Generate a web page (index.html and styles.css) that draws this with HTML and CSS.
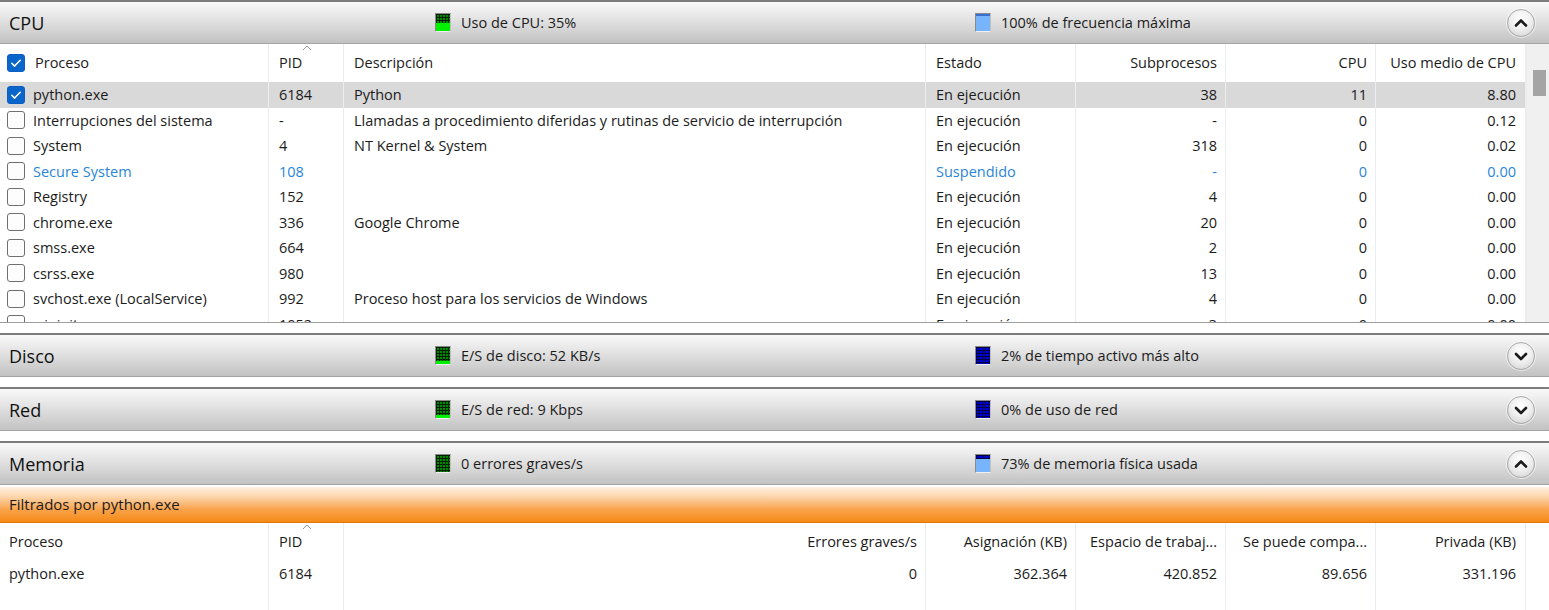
FILE: index.html
```html
<!DOCTYPE html>
<html lang="es">
<head>
<meta charset="utf-8">
<title>Monitor de recursos</title>
<link rel="stylesheet" href="styles.css">
</head>
<body>
<div class="app">

  <section class="panel">
    <header class="bar">
      <div class="bar-title">CPU</div>
      <div class="stat"><span class="ico ico-green fill-45"></span>Uso de CPU: 35%</div>
      <div class="stat"><span class="ico ico-freq"></span>100% de frecuencia máxima</div>
      <button class="chev"><svg width="28" height="28" viewBox="0 0 28 28"><path d="M9 16.5 L14 11.5 L19 16.5" fill="none" stroke="#1c1c1c" stroke-width="2.6" stroke-linecap="round" stroke-linejoin="round"/></svg></button>
    </header>
    <div class="tbl-wrap">
      <div class="tbl">
        <div class="row head">
          <div class="c c-proc"><span class="cb on"><svg width="18" height="18" viewBox="0 0 18 18"><path d="M4.8 9.3 L7.6 12.1 L13.2 6.3" fill="none" stroke="#fff" stroke-width="1.5" stroke-linecap="round" stroke-linejoin="round"/></svg></span><span class="head-lbl">Proceso</span></div>
          <div class="c c-sort">PID<svg class="sort" width="10" height="6" viewBox="0 0 10 6"><path d="M1 5 L5 1 L9 5" fill="none" stroke="#9a9a9a" stroke-width="1"/></svg></div>
          <div class="c">Descripción</div>
          <div class="c">Estado</div>
          <div class="c r">Subprocesos</div>
          <div class="c r">CPU</div>
          <div class="c r">Uso medio de CPU</div>
        </div>
        <div class="row sel">
          <div class="c c-proc"><span class="cb on"><svg width="18" height="18" viewBox="0 0 18 18"><path d="M4.8 9.3 L7.6 12.1 L13.2 6.3" fill="none" stroke="#fff" stroke-width="1.5" stroke-linecap="round" stroke-linejoin="round"/></svg></span>python.exe</div>
          <div class="c">6184</div><div class="c">Python</div><div class="c">En ejecución</div>
          <div class="c r">38</div><div class="c r">11</div><div class="c r">8.80</div>
        </div>
        <div class="row">
          <div class="c c-proc"><span class="cb"></span>Interrupciones del sistema</div>
          <div class="c">-</div><div class="c">Llamadas a procedimiento diferidas y rutinas de servicio de interrupción</div><div class="c">En ejecución</div>
          <div class="c r">-</div><div class="c r">0</div><div class="c r">0.12</div>
        </div>
        <div class="row">
          <div class="c c-proc"><span class="cb"></span>System</div>
          <div class="c">4</div><div class="c">NT Kernel &amp; System</div><div class="c">En ejecución</div>
          <div class="c r">318</div><div class="c r">0</div><div class="c r">0.02</div>
        </div>
        <div class="row blue">
          <div class="c c-proc"><span class="cb"></span>Secure System</div>
          <div class="c">108</div><div class="c"></div><div class="c">Suspendido</div>
          <div class="c r">-</div><div class="c r">0</div><div class="c r">0.00</div>
        </div>
        <div class="row">
          <div class="c c-proc"><span class="cb"></span>Registry</div>
          <div class="c">152</div><div class="c"></div><div class="c">En ejecución</div>
          <div class="c r">4</div><div class="c r">0</div><div class="c r">0.00</div>
        </div>
        <div class="row">
          <div class="c c-proc"><span class="cb"></span>chrome.exe</div>
          <div class="c">336</div><div class="c">Google Chrome</div><div class="c">En ejecución</div>
          <div class="c r">20</div><div class="c r">0</div><div class="c r">0.00</div>
        </div>
        <div class="row">
          <div class="c c-proc"><span class="cb"></span>smss.exe</div>
          <div class="c">664</div><div class="c"></div><div class="c">En ejecución</div>
          <div class="c r">2</div><div class="c r">0</div><div class="c r">0.00</div>
        </div>
        <div class="row">
          <div class="c c-proc"><span class="cb"></span>csrss.exe</div>
          <div class="c">980</div><div class="c"></div><div class="c">En ejecución</div>
          <div class="c r">13</div><div class="c r">0</div><div class="c r">0.00</div>
        </div>
        <div class="row">
          <div class="c c-proc"><span class="cb"></span>svchost.exe (LocalService)</div>
          <div class="c">992</div><div class="c">Proceso host para los servicios de Windows</div><div class="c">En ejecución</div>
          <div class="c r">4</div><div class="c r">0</div><div class="c r">0.00</div>
        </div>
        <div class="row">
          <div class="c c-proc"><span class="cb"></span>wininit.exe</div>
          <div class="c">1052</div><div class="c"></div><div class="c">En ejecución</div>
          <div class="c r">3</div><div class="c r">0</div><div class="c r">0.00</div>
        </div>
      </div>
      <div class="scroll"><div class="thumb"></div></div>
    </div>
  </section>

  <section class="panel">
    <header class="bar">
      <div class="bar-title">Disco</div>
      <div class="stat"><span class="ico ico-green fill-10"></span>E/S de disco: 52 KB/s</div>
      <div class="stat"><span class="ico ico-blue"></span>2% de tiempo activo más alto</div>
      <button class="chev"><svg width="28" height="28" viewBox="0 0 28 28"><path d="M9 12 L14 17 L19 12" fill="none" stroke="#1c1c1c" stroke-width="2.6" stroke-linecap="round" stroke-linejoin="round"/></svg></button>
    </header>
  </section>

  <section class="panel">
    <header class="bar">
      <div class="bar-title">Red</div>
      <div class="stat"><span class="ico ico-green fill-10"></span>E/S de red: 9 Kbps</div>
      <div class="stat"><span class="ico ico-blue"></span>0% de uso de red</div>
      <button class="chev"><svg width="28" height="28" viewBox="0 0 28 28"><path d="M9 12 L14 17 L19 12" fill="none" stroke="#1c1c1c" stroke-width="2.6" stroke-linecap="round" stroke-linejoin="round"/></svg></button>
    </header>
  </section>

  <section class="panel panel-last">
    <header class="bar">
      <div class="bar-title">Memoria</div>
      <div class="stat"><span class="ico ico-green"></span>0 errores graves/s</div>
      <div class="stat"><span class="ico ico-mem"></span>73% de memoria física usada</div>
      <button class="chev"><svg width="28" height="28" viewBox="0 0 28 28"><path d="M9 16.5 L14 11.5 L19 16.5" fill="none" stroke="#1c1c1c" stroke-width="2.6" stroke-linecap="round" stroke-linejoin="round"/></svg></button>
    </header>
    <div class="filter">Filtrados por python.exe</div>
    <div class="tbl tbl-mem">
      <div class="row head">
        <div class="c c-plain">Proceso</div>
        <div class="c c-sort">PID<svg class="sort" width="10" height="6" viewBox="0 0 10 6"><path d="M1 5 L5 1 L9 5" fill="none" stroke="#9a9a9a" stroke-width="1"/></svg></div>
        <div class="c r">Errores graves/s</div>
        <div class="c r">Asignación (KB)</div>
        <div class="c r">Espacio de trabaj...</div>
        <div class="c r">Se puede compa...</div>
        <div class="c r">Privada (KB)</div>
      </div>
      <div class="row">
        <div class="c c-plain">python.exe</div>
        <div class="c">6184</div>
        <div class="c r">0</div>
        <div class="c r">362.364</div>
        <div class="c r">420.852</div>
        <div class="c r">89.656</div>
        <div class="c r">331.196</div>
      </div>
      <div class="row filler">
        <div class="c"></div><div class="c"></div><div class="c"></div><div class="c"></div><div class="c"></div><div class="c"></div><div class="c"></div>
      </div>
    </div>
  </section>

</div>
</body>
</html>
```

FILE: styles.css
```css
* { box-sizing: border-box; }

html, body {
  margin: 0;
  padding: 0;
  background: #ffffff;
}

body {
  width: 1549px;
  height: 610px;
  overflow: hidden;
  font-family: "Open Sans", "Noto Sans", sans-serif;
  font-size: 14.5px;
  color: #1b1b1b;
}

.app {
  display: flex;
  flex-direction: column;
}

.panel {
  display: flex;
  flex-direction: column;
  margin-bottom: 10px;
}

.panel-last {
  margin-bottom: 0;
}

/* section header bar */
.bar {
  display: grid;
  grid-template-columns: 435px 540px 1fr auto;
  align-items: center;
  height: 44px;
  border-top: 2px solid #7c7c7c;
  border-bottom: 1px solid #a3a3a3;
  background: linear-gradient(to bottom, #f9f9f9 0%, #ececec 25%, #d6d6d6 65%, #c2c2c2 100%);
}

.bar-title {
  padding-left: 9px;
  font-size: 18px;
  color: #111;
}

.stat {
  display: flex;
  align-items: center;
  gap: 10px;
  font-size: 14.5px;
  color: #1b1b1b;
}

.ico {
  display: inline-block;
  width: 16px;
  height: 19px;
  border: 1px solid #8a8a8a;
  border-bottom-color: #f0f0f0;
  border-right-color: #c0c0c0;
  flex: none;
}

.ico-green {
  background-color: #008a00;
  background-image:
    linear-gradient(90deg, #002000 1px, transparent 1px),
    linear-gradient(#002000 1px, transparent 1px);
  background-size: 3px 3px;
}

.ico-green.fill-45 {
  background-image:
    linear-gradient(to top, #00f000 0, #00f000 45%, transparent 45%),
    linear-gradient(90deg, #002000 1px, transparent 1px),
    linear-gradient(#002000 1px, transparent 1px);
  background-size: 100% 100%, 3px 3px, 3px 3px;
}

.ico-green.fill-10 {
  background-image:
    linear-gradient(to top, #00f000 0, #00f000 18%, transparent 18%),
    linear-gradient(90deg, #002000 1px, transparent 1px),
    linear-gradient(#002000 1px, transparent 1px);
  background-size: 100% 100%, 3px 3px, 3px 3px;
}

.ico-blue {
  background-color: #0000f0;
  background-image:
    linear-gradient(90deg, #000040 1px, transparent 1px),
    linear-gradient(#000040 1px, transparent 1px);
  background-size: 3px 3px;
}

.ico-freq {
  background: linear-gradient(to bottom, #3a6fd0 0, #3a6fd0 2px, #78b4fb 2px, #78b4fb 100%);
}

.ico-mem {
  background-image:
    linear-gradient(to bottom, transparent 0, transparent 25%, #78b4fb 25%),
    linear-gradient(90deg, #000040 1px, transparent 1px),
    linear-gradient(#000040 1px, transparent 1px);
  background-color: #0000f0;
  background-size: 100% 100%, 3px 3px, 3px 3px;
}

.chev {
  width: 28px;
  height: 28px;
  margin-right: 14px;
  padding: 0;
  border: 1px solid #a9a9a9;
  border-radius: 50%;
  background: radial-gradient(circle at 50% 35%, #ffffff 0%, #f0f0f0 45%, #cfcfcf 100%);
  box-shadow: 0 0 0 1px rgba(255,255,255,0.6);
  display: flex;
  align-items: center;
  justify-content: center;
}

.chev svg {
  display: block;
  margin: -1px;
}

/* tables */
.tbl-wrap {
  display: flex;
  height: 279px;
  border-bottom: 1px solid #9e9e9e;
  overflow: hidden;
}

.tbl {
  display: flex;
  flex-direction: column;
  width: 1526px;
  flex: none;
}

.row {
  display: grid;
  grid-template-columns: 269px 75px 582px 150px 150px 150px 150px;
  height: 25.5px;
  line-height: 25.5px;
}

.row.head {
  height: 38px;
  line-height: 38px;
}

.row.sel {
  background: #d9d9d9;
}

.row.blue {
  color: #2a86d6;
}

.c {
  position: relative;
  padding: 0 8px 0 10px;
  border-right: 1px solid #e9eef3;
  white-space: nowrap;
  overflow: hidden;
}

.c.r {
  text-align: right;
}

.tbl > .row > .c:nth-child(7).r {
  padding-right: 9px;
}

.c-proc {
  display: flex;
  align-items: center;
  gap: 8px;
  padding-left: 7px;
}

.head-lbl {
  padding-left: 2px;
}

.c-plain {
  padding-left: 9px;
}

.c-sort {
  overflow: visible;
}

.sort {
  position: absolute;
  left: 33px;
  top: 1px;
}

.cb {
  width: 18px;
  height: 18px;
  flex: none;
  border: 1px solid #6f6f6f;
  border-radius: 3px;
  background: #fdfdfd;
}

.cb.on {
  border-color: #0a5fc0;
  background: #0b66cc;
}

.cb svg {
  display: block;
  margin: -1px;
}

.scroll {
  flex: 1;
  background: #f0f0f0;
  border-left: 1px solid #ececec;
  position: relative;
}

.thumb {
  margin: 26px 0 0 6px;
  width: 13px;
  height: 26px;
  background: #a4a4a4;
}

/* filter bar */
.filter {
  margin-top: 2px;
  height: 36px;
  line-height: 35px;
  padding-left: 9px;
  font-size: 15px;
  color: #1b1b1b;
  background: linear-gradient(to bottom, #fff1e2 0%, #fcd2a6 30%, #f9a24a 65%, #f58a16 100%);
  border-bottom: 1px solid #e07810;
}

.tbl-mem .row.head {
  height: 37px;
  line-height: 37px;
}

.tbl-mem .row {
  height: 27px;
  line-height: 27px;
}

.tbl-mem .row.filler {
  height: 30px;
}

.tbl-mem .c.r {
  padding-right: 8px;
}
```
